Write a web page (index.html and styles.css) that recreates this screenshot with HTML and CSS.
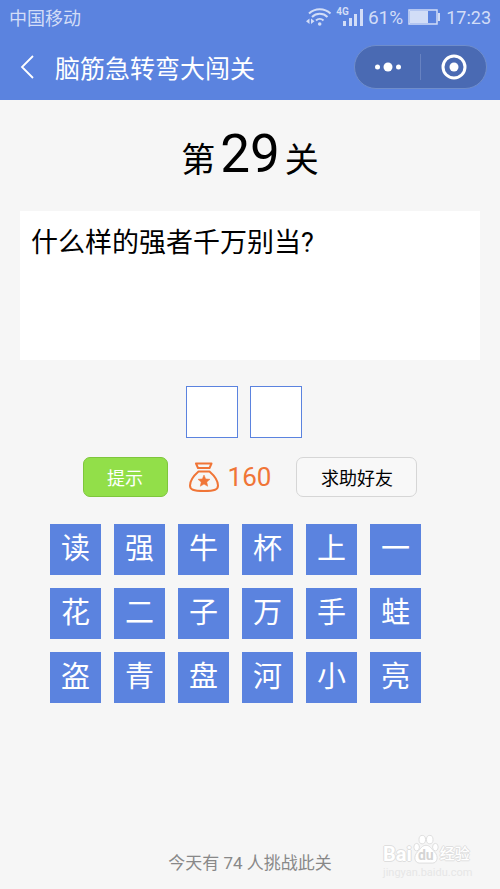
FILE: index.html
```html
<!DOCTYPE html>
<html lang="zh-CN">
<head>
<meta charset="utf-8">
<meta name="viewport" content="width=device-width, initial-scale=1">
<title>脑筋急转弯大闯关</title>
<link rel="stylesheet" href="styles.css">
</head>
<body>
<header class="top">
  <div class="status">
    <span class="carrier">中国移动</span>
    <div class="indicators">
      <svg width="26" height="20" viewBox="0 0 26 20" fill="none" stroke="currentColor" stroke-width="2">
        <path d="M3 6.500a15.500 15.500 0 0 1 21.500 0M6 10a11 11 0 0 1 15.500 0M10 13.500a5.500 5.500 0 0 1 7.500 0"/>
        <circle cx="13.700" cy="17" r="1.800" fill="currentColor" stroke="none"/>
        <path d="M3.500 11.500v5.500L0 14.200zM5 11.500v5.500l3.500-2.800z" fill="currentColor" stroke="none"/>
      </svg>
      <span class="network">4G</span>
      <svg class="signal" width="20" height="18" viewBox="0 0 20 18" fill="currentColor">
        <path d="M0 13h3v5H0zM6 10h3v8H6zM11 6h3v12h-3zM17 1h3v17h-3z"/>
      </svg>
      <span class="percent">61%</span>
      <svg class="battery" width="32" height="16" viewBox="0 0 32 16" fill="currentColor">
        <path d="M1 1h28v14H1z" fill="none" stroke="currentColor" stroke-width="1.500"/>
        <path d="M2 2h18v12H2zM30 4h2v8h-2z"/>
      </svg>
      <span class="clock">17:23</span>
    </div>
  </div>
  <nav class="nav">
    <button class="back" aria-label="返回">
      <svg width="14" height="24" viewBox="0 0 14 24" fill="none" stroke="currentColor" stroke-width="1.800"><path d="M13 1 2 12l11 11"/></svg>
    </button>
    <h1 class="title">脑筋急转弯大闯关</h1>
    <div class="capsule">
      <button class="capsule-button" aria-label="更多">
        <svg width="26" height="10" viewBox="0 0 26 10" fill="currentColor"><circle cx="2.500" cy="5" r="2.500"/><circle cx="13" cy="5" r="4.500"/><circle cx="23.500" cy="5" r="2.500"/></svg>
      </button>
      <button class="capsule-button capsule-close" aria-label="关闭">
        <svg width="26" height="26" viewBox="0 0 26 26"><circle cx="13" cy="13" r="11" fill="none" stroke="currentColor" stroke-width="3"/><circle cx="13" cy="13" r="4.500" fill="currentColor"/></svg>
      </button>
    </div>
  </nav>
</header>
<main class="game">
  <h2 class="level">第<span class="level-number">29</span>关</h2>
  <p class="question">什么样的强者千万别当?</p>
  <div class="answer">
    <button class="slot" aria-label="答案第一字"></button>
    <button class="slot" aria-label="答案第二字"></button>
  </div>
  <div class="actions">
    <button class="action hint">提示</button>
    <div class="coins">
      <svg width="30" height="30" viewBox="0 0 30 30" fill="none" stroke="currentColor" stroke-width="2" stroke-linejoin="round">
        <path d="M7 1.500h15.500l-2 4.500H9z"/>
        <path d="M9.500 9.500h11C24.500 13 29 18.500 29 23.500c0 4-3 5.500-14 5.500S1 27.500 1 23.500c0-5 4.500-10.500 8.500-14z"/>
        <path d="m15 13 1.700 3.900 4.300.4-3.200 2.800.9 4.200-3.700-2.200-3.700 2.200.9-4.200L9 17.300l4.300-.4z" fill="currentColor" stroke-width=".5"/>
      </svg>
      <span>160</span>
    </div>
    <button class="action help">求助好友</button>
  </div>
  <div class="tiles">
    <button class="tile">读</button><button class="tile">强</button><button class="tile">牛</button><button class="tile">杯</button><button class="tile">上</button><button class="tile">一</button>
    <button class="tile">花</button><button class="tile">二</button><button class="tile">子</button><button class="tile">万</button><button class="tile">手</button><button class="tile">蛙</button>
    <button class="tile">盗</button><button class="tile">青</button><button class="tile">盘</button><button class="tile">河</button><button class="tile">小</button><button class="tile">亮</button>
  </div>
</main>
<footer class="footer">今天有 74 人挑战此关</footer>
<div class="watermark">
  <div class="brand">
    <span class="brand-latin">Bai</span>
    <span class="paw">
      <svg width="28" height="30" viewBox="0 0 28 32" fill="#fff" stroke="#dcdcdc">
        <ellipse cx="4" cy="14" rx="3" ry="4"/><ellipse cx="10" cy="6" rx="3.500" ry="4.500"/><ellipse cx="18" cy="6" rx="3.500" ry="4.500"/><ellipse cx="24" cy="14" rx="3" ry="4"/>
        <path d="M14 12c4 0 6 4 9 7 5 5 3 12-2 12H7c-5 0-7-7-2-12 3-3 5-7 9-7z"/>
      </svg>
      <span class="paw-text">du</span>
    </span>
    <span class="brand-cjk">经验</span>
  </div>
  <div class="site">jingyan.baidu.com</div>
</div>
</body>
</html>
```
FILE: styles.css
```css
* { box-sizing: border-box; }

body {
  margin: 0;
  min-height: 100vh;
  display: flex;
  flex-direction: column;
  position: relative;
  background: #f6f6f6;
  color: #000;
  font-family: Roboto, "Noto Sans CJK SC", sans-serif;
}

button {
  margin: 0;
  padding: 0;
  border: 0;
  background: none;
  color: inherit;
  font: inherit;
}

svg { display: block; }

.top {
  height: 100px;
  background: #5b83df;
  color: #fff;
}

.status {
  height: 34px;
  padding: 0 9px;
  display: flex;
  align-items: center;
  justify-content: space-between;
  color: #d2ddf7;
  font-size: 18px;
}

.indicators { display: flex; align-items: center; }

.network {
  align-self: flex-start;
  margin-left: 4px;
  font-size: 10px;
  font-weight: 700;
  line-height: 12px;
}

.signal { margin-left: -6px; }
.percent { margin-left: 5px; font-size: 19px; }
.battery { margin: 0 6px 0 5px; }
.clock { font-size: 18px; }

.nav {
  height: 66px;
  padding: 0 13px 0 20px;
  display: flex;
  align-items: center;
}

.title {
  flex: 1;
  margin: 0 0 0 21px;
  font-size: 25px;
  font-weight: 400;
}

.capsule {
  width: 133px;
  height: 44px;
  display: flex;
  align-items: center;
  border: 1px solid #6f8dcb;
  border-radius: 22px;
  background: #4a6ab3;
}

.capsule-button {
  flex: 1;
  height: 26px;
  display: flex;
  align-items: center;
  justify-content: center;
}

.capsule-close { border-left: 1px solid #6782c1; }

.game { padding: 0 20px; }

.level {
  height: 111px;
  margin: 0;
  display: flex;
  align-items: baseline;
  justify-content: center;
  gap: 5px;
  font-size: 34px;
  font-weight: 400;
  line-height: 109px;
}

.level-number { font-size: 53px; }

.question {
  min-height: 149px;
  margin: 0;
  padding: 12px 11px;
  background: #fff;
  font-size: 27px;
  line-height: 40px;
}

.answer {
  margin-top: 26px;
  padding-right: 12px;
  display: flex;
  justify-content: center;
  gap: 12px;
}

.slot {
  width: 52px;
  height: 52px;
  border: 1px solid #5b83df;
  background: #fff;
}

.actions {
  margin-top: 19px;
  display: flex;
  align-items: center;
  justify-content: center;
}

.action {
  height: 40px;
  border: 1px solid #d6d6d6;
  border-radius: 7px;
  background: #f8f8f8;
  font-size: 18px;
}

.hint {
  width: 85px;
  border-color: #7ec63c;
  background: #92df49;
  color: #fff;
}

.help { width: 121px; }

.coins {
  margin: 0 25px 0 21px;
  display: flex;
  align-items: center;
  gap: 9px;
  color: #f07537;
  font-size: 26px;
}

.tiles {
  margin: 27px 0 0 30px;
  display: grid;
  grid-template-columns: repeat(6, 51px);
  gap: 13px;
}

.tile {
  height: 51px;
  padding-bottom: 1px;
  background: #5b83df;
  color: #fff;
  font-size: 29px;
  line-height: 50px;
}

.footer {
  margin-top: auto;
  padding-bottom: 14px;
  color: #888;
  font-size: 17px;
  line-height: 24px;
  text-align: center;
}

.watermark {
  position: absolute;
  right: 28px;
  bottom: 10px;
  width: 89px;
  color: #fff;
  text-shadow: 1px 0 #dedede, -1px 0 #dedede, 0 1px #dedede, 0 -1px #dedede;
}

.brand {
  height: 30px;
  margin-bottom: 3px;
  display: flex;
  align-items: flex-end;
  line-height: 20px;
}

.brand-latin { font-size: 20px; font-weight: 700; }
.brand-cjk { font-size: 15px; font-weight: 500; }
.paw { position: relative; }

.paw-text {
  position: absolute;
  left: 0;
  right: 0;
  bottom: 0;
  color: #d4d4d4;
  font-size: 14px;
  font-weight: 700;
  line-height: 18px;
  text-align: center;
  text-shadow: none;
}

.site {
  color: #e6e6e6;
  font-size: 11px;
  line-height: 12px;
  text-shadow: none;
}
```
